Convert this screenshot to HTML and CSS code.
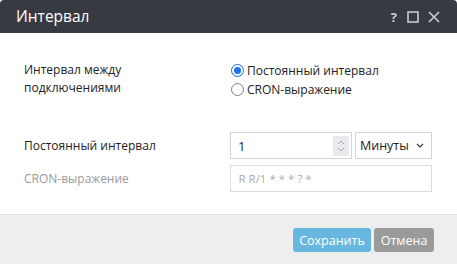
FILE: index.html
```html
<!DOCTYPE html>
<html>
<head>
<meta charset="utf-8">
<link rel="stylesheet" href="styles.css">
</head>
<body>
<div class="dialog">
  <div class="header">
    <span class="title">Интервал</span>
    <div class="tools">
      <span class="help">?</span>
      <svg class="ico" width="12" height="12" viewBox="0 0 12 12"><rect x="1" y="1" width="10" height="10" fill="none" stroke="#c9cbce" stroke-width="1.6"/></svg>
      <svg class="ico" width="12" height="12" viewBox="0 0 12 12"><path d="M1 1 L11 11 M11 1 L1 11" stroke="#c9cbce" stroke-width="1.7"/></svg>
    </div>
  </div>
  <div class="body">
    <div class="row first">
      <div class="label">Интервал между<br>подключениями</div>
      <div class="radios">
        <label class="radio"><span class="dot on"></span>Постоянный интервал</label>
        <label class="radio"><span class="dot"></span>CRON-выражение</label>
      </div>
    </div>
    <div class="row field">
      <div class="label">Постоянный интервал</div>
      <div class="controls">
        <div class="num">
          <span class="val">1</span>
          <span class="spin">
            <svg width="10" height="14" viewBox="0 0 10 14"><path d="M2 5 L5 2 L8 5 M2 9 L5 12 L8 9" fill="none" stroke="#a8a8b0" stroke-width="1"/></svg>
          </span>
        </div>
        <div class="select">
          <span>Минуты</span>
          <svg width="8" height="5" viewBox="0 0 8 5"><path d="M1 1 L4 4 L7 1" fill="none" stroke="#333" stroke-width="1.2"/></svg>
        </div>
      </div>
    </div>
    <div class="row field2">
      <div class="label dim">CRON-выражение</div>
      <div class="cron">R R/1 * * * ? *</div>
    </div>
  </div>
  <div class="footer">
    <button class="btn save">Сохранить</button>
    <button class="btn cancel">Отмена</button>
  </div>
</div>
</body>
</html>
```
FILE: styles.css
```css
html, body { margin: 0; padding: 0; background: #ffffff; }
body { font-family: "Open Sans", "Noto Sans", sans-serif; font-size: 12px; color: #222; }
.dialog { width: 457px; height: 264px; display: flex; flex-direction: column; overflow: hidden; border-radius: 4px 4px 0 0; }
.header { height: 33px; flex: none; background: #373a41; display: flex; align-items: center; padding: 0 17px 0 16px; box-sizing: border-box; }
.title { color: #ffffff; font-size: 15.5px; flex: 1; position: relative; top: -1px; }
.tools { display: flex; align-items: center; gap: 9px; }
.help { color: #c9cbce; font-weight: bold; font-size: 13px; margin-right: 1px; }
.body { flex: 1; background: #ffffff; padding: 0 25px 0 24px; box-sizing: border-box; }
.row { display: flex; }
.label { width: 207px; line-height: 18px; }
.first { margin-top: 28px; }
.radios { display: flex; flex-direction: column; line-height: 19px; }
.radio { display: flex; align-items: center; }
.dot { width: 11px; height: 11px; border: 1px solid #808080; border-radius: 50%; margin-right: 3px; box-sizing: content-box; position: relative; background: #fff; }
.dot.on { border-color: #0f6fd6; }
.dot.on::after { content: ""; position: absolute; left: 2px; top: 2px; width: 7px; height: 7px; border-radius: 50%; background: #1a73e8; }
.field { margin-top: 33px; align-items: center; }
.controls { display: flex; gap: 3px; }
.num { width: 122px; height: 27px; border: 1px solid #d4d4d4; box-sizing: border-box; display: flex; align-items: center; justify-content: space-between; padding: 0 2px 0 7px; font-size: 13px; }
.spin { width: 16px; height: 20px; background: #e9e9ee; display: flex; align-items: center; justify-content: center; }
.select { width: 77px; height: 27px; border: 1px solid #d4d4d4; box-sizing: border-box; display: flex; align-items: center; justify-content: space-between; padding: 0 7px 0 4px; font-size: 12.5px; }
.field2 { margin-top: 6px; align-items: center; }
.dim { color: #9a9a9a; }
.cron { width: 202px; height: 27px; border: 1px solid #dcdcdc; box-sizing: border-box; display: flex; align-items: center; padding: 0 7px; color: #ababab; font-size: 11.5px; }
.footer { height: 50px; flex: none; background: #eeeeee; border-top: 1px solid #e2e2e2; box-sizing: border-box; display: flex; justify-content: flex-end; align-items: flex-start; padding: 13px 23px 0 0; gap: 3px; }
.btn { font-family: inherit; font-size: 12.5px; color: #ffffff; border: none; border-radius: 3px; height: 24px; padding: 0; }
.save { width: 78px; background: #68b7e0; }
.cancel { width: 60px; background: #9a9a9a; }
```
